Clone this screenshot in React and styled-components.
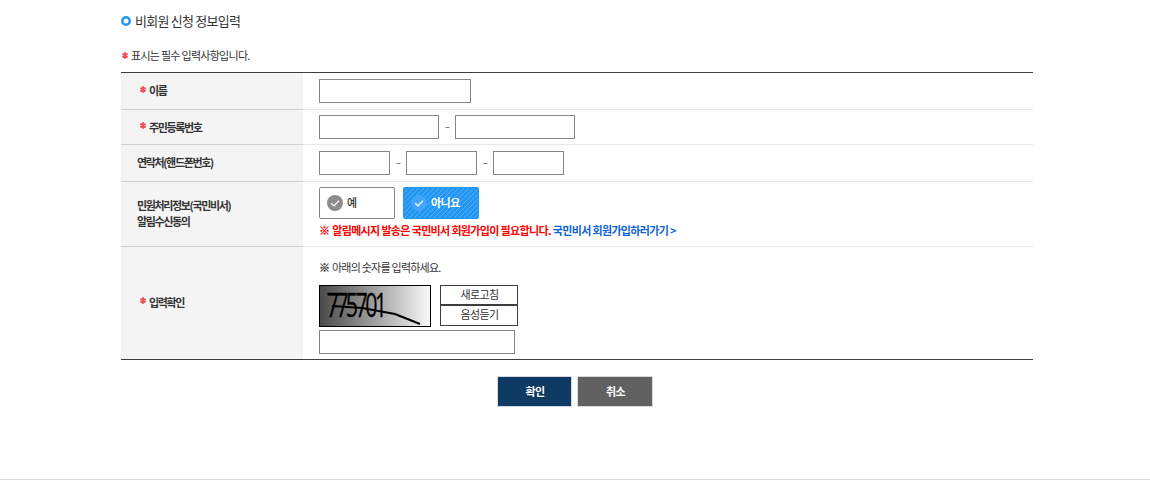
import React from 'react';
import styled, { createGlobalStyle } from 'styled-components';

const GlobalStyle = createGlobalStyle`
  * { box-sizing: border-box; }
  body {
    margin: 0;
    background: #fff;
    color: #333;
    font-family: "Noto Sans CJK KR", "Noto Sans", sans-serif;
    font-size: 11px;
    letter-spacing: -1px;
  }
`;

const Page = styled.div`
  height: 480px;
  display: flex;
  flex-direction: column;
  justify-content: space-between;
  border-bottom: 1px solid #d9d9d9;
`;

const Content = styled.main`
  width: 912px;
  margin-left: 121px;
  padding-top: 11px;
`;

const Title = styled.h1`
  display: flex;
  align-items: center;
  gap: 4px;
  height: 20px;
  margin: 0;
  font-size: 13px;
  font-weight: 400;
  line-height: 20px;
  letter-spacing: -0.75px;
`;

const Ring = styled.svg`
  width: 10px;
  height: 10px;
  fill: none;
  stroke: #2196f3;
  stroke-width: 2.5;
`;

const Notice = styled.p`
  display: flex;
  align-items: center;
  gap: 3px;
  height: 16px;
  margin: 16px 0 9px;
  line-height: 16px;
  letter-spacing: -0.72px;
`;

const Star = styled.svg`
  flex: none;
  width: 6px;
  height: 7px;
  stroke: #f0505a;
  stroke-width: 1.95;
  margin-left: ${(p) => p.$indent || 0}px;
  margin-bottom: ${(p) => p.$raise || 0}px;
`;

const Form = styled.div`
  border-top: 1px solid #3d3d3d;
  border-bottom: 1px solid #3d3d3d;
`;

const Row = styled.div`
  display: grid;
  grid-template-columns: 182px 1fr;
  height: ${(p) => p.$h}px;
`;

const Label = styled.div`
  display: flex;
  align-items: center;
  gap: 3px;
  padding: 0 0 ${(p) => p.$lift || 0}px 16px;
  background: #f4f4f4;
  border-bottom: ${(p) => (p.$last ? 0 : 1)}px solid #d0d0d0;
  font-weight: 700;
  line-height: 16px;
  letter-spacing: -1.35px;
`;

const Cell = styled.div`
  padding: ${(p) => p.$top}px 0 0 16px;
  border-bottom: ${(p) => (p.$last ? 0 : 1)}px solid #e8e8e8;
`;

const Line = styled.div`
  display: flex;
  align-items: flex-start;
  gap: ${(p) => p.$gap || 0}px;
`;

const Input = styled.input`
  display: block;
  width: ${(p) => p.$w}px;
  height: 24px;
  padding: 0 5px;
  border: 1px solid #868686;
  border-radius: 0;
  background: #fff;
  outline: 0;
`;

const CaptchaInput = styled(Input)`
  margin-top: 3px;
`;

const Dash = styled.span`
  width: 16px;
  height: 24px;
  padding-left: 1px;
  font-size: 16px;
  font-weight: 300;
  line-height: 20px;
  text-align: center;
  letter-spacing: 0;
  color: #666;
`;

const Choice = styled.button`
  display: flex;
  align-items: center;
  gap: 4px;
  width: 76px;
  height: 32px;
  padding: 0 0 0 7px;
  border: 1px solid ${(p) => (p.$on ? '#2196f3' : '#868686')};
  border-radius: 2px;
  background: ${(p) =>
    p.$on
      ? 'repeating-linear-gradient(135deg, #2196f3 0 2.84px, #55aff7 2.84px 3.54px)'
      : '#fff'};
  color: ${(p) => (p.$on ? '#fff' : '#333')};
  font: inherit;
  font-weight: ${(p) => (p.$on ? 700 : 500)};
  line-height: 16px;
  letter-spacing: -0.5px;
`;

const ChoiceText = styled.span`
  padding-bottom: 2px;
`;

const Check = styled.svg`
  width: 16px;
  height: 16px;
  fill: none;
  stroke: #fff;
  stroke-width: 1.3;
`;

const Warning = styled.p`
  margin: 3px 0 0;
  line-height: 16px;
  font-weight: 700;
  letter-spacing: -0.65px;
  color: #f00;
  white-space: nowrap;
`;

const Mark = styled.span`
  margin-right: 1px;
  -webkit-text-stroke: 0.3px currentColor;
`;

const Link = styled.a`
  color: #0b63d8;
`;

const Guide = styled.p`
  margin: 0 0 10px;
  line-height: 16px;
  letter-spacing: -0.76px;
`;

const Captcha = styled.svg`
  width: 112px;
  height: 42px;
  overflow: visible;
  border: 1px solid #000;
  background: linear-gradient(90deg, #4a4a4a, #f8f8f8);
`;

const Digits = styled.text`
  font-family: "Open Sans", sans-serif;
  font-size: 33px;
  font-weight: 400;
  letter-spacing: -4px;
  stroke: #000;
  stroke-width: 0.3;
`;

const Tools = styled.div`
  display: flex;
  flex-direction: column;
`;

const ToolButton = styled.button`
  width: 78px;
  height: ${(p) => p.$h}px;
  padding: 0 0 ${(p) => p.$lift}px 1px;
  border: 1px solid #3d3d3d;
  background: #fff;
  color: #333;
  font: inherit;
  line-height: 16px;
  letter-spacing: -0.6px;
`;

const Actions = styled.div`
  display: flex;
  gap: 5px;
  padding: 16px 0 0 376px;
`;

const Action = styled.button`
  width: ${(p) => p.$w}px;
  height: 31px;
  padding: 0 0 2px 1px;
  border: 1px solid #d5d8dc;
  background: ${(p) => p.$bg};
  color: #fff;
  font: inherit;
  font-weight: 700;
  line-height: 16px;
  letter-spacing: -0.6px;
`;

const Required = ({ indent, raise }) => (
  <Star viewBox="0 0 6 7" $indent={indent} $raise={raise} aria-hidden="true">
    <path d="M3 0.3V6.7M0.3 1.9L5.7 5.1M5.7 1.9L0.3 5.1" />
  </Star>
);

const CheckMark = ({ fill }) => (
  <Check viewBox="0 0 16 16" aria-hidden="true">
    <circle cx="8" cy="8" r="8" fill={fill} stroke="none" />
    <path d="M4.2 8.2L7 10.9L12 5.6" />
  </Check>
);

export default function App() {
  return (
    <Page>
      <GlobalStyle />
      <Content>
        <Title>
          <Ring viewBox="0 0 10 10" aria-hidden="true"><circle cx="5" cy="5" r="3.75" /></Ring>
          비회원 신청 정보입력
        </Title>
        <Notice><Required indent={1} />표시는 필수 입력사항입니다.</Notice>
        <Form>
          <Row $h={37}>
            <Label $lift={2}><Required indent={3} raise={2} />이름</Label>
            <Cell $top={6}><Input $w={152} aria-label="이름" /></Cell>
          </Row>
          <Row $h={35}>
            <Label $lift={1}><Required indent={3} raise={3} />주민등록번호</Label>
            <Cell $top={5}>
              <Line><Input $w={120} /><Dash>-</Dash><Input $w={120} /></Line>
            </Cell>
          </Row>
          <Row $h={37}>
            <Label $lift={3}>연락처(핸드폰번호)</Label>
            <Cell $top={6}>
              <Line>
                <Input $w={71} /><Dash>-</Dash>
                <Input $w={71} /><Dash>-</Dash>
                <Input $w={71} />
              </Line>
            </Cell>
          </Row>
          <Row $h={65}>
            <Label $lift={2}>민원처리정보(국민비서)<br />알림수신동의</Label>
            <Cell $top={5}>
              <Line $gap={8}>
                <Choice type="button"><CheckMark fill="#8b8b8b" /><ChoiceText>예</ChoiceText></Choice>
                <Choice type="button" $on><CheckMark fill="#42a5f9" /><ChoiceText>아니요</ChoiceText></Choice>
              </Line>
              <Warning><Mark>※</Mark> 알림메시지 발송은 국민비서 회원가입이 필요합니다. <Link>국민비서 회원가입하러가기 &gt;</Link></Warning>
            </Cell>
          </Row>
          <Row $h={112}>
            <Label $last $lift={3}><Required indent={3} raise={2} />입력확인</Label>
            <Cell $last $top={12}>
              <Guide><Mark>※</Mark> 아래의 숫자를 입력하세요.</Guide>
              <Line $gap={9}>
                <Captcha viewBox="0 0 110 40">
                  <Digits transform="translate(6.5 31) scale(0.65 1)">775701</Digits>
                  <path d="M12 20L42 22L75 28L100 38" fill="none" stroke="#000" strokeWidth="2.2" />
                </Captcha>
                <Tools>
                  <ToolButton type="button" $h={20} $lift={2}>새로고침</ToolButton>
                  <ToolButton type="button" $h={21} $lift={3}>음성듣기</ToolButton>
                </Tools>
              </Line>
              <CaptchaInput $w={196} aria-label="입력확인" />
            </Cell>
          </Row>
        </Form>
        <Actions>
          <Action type="button" $w={75} $bg="#0f3a63">확인</Action>
          <Action type="button" $w={76} $bg="#616161">취소</Action>
        </Actions>
      </Content>
    </Page>
  );
}
